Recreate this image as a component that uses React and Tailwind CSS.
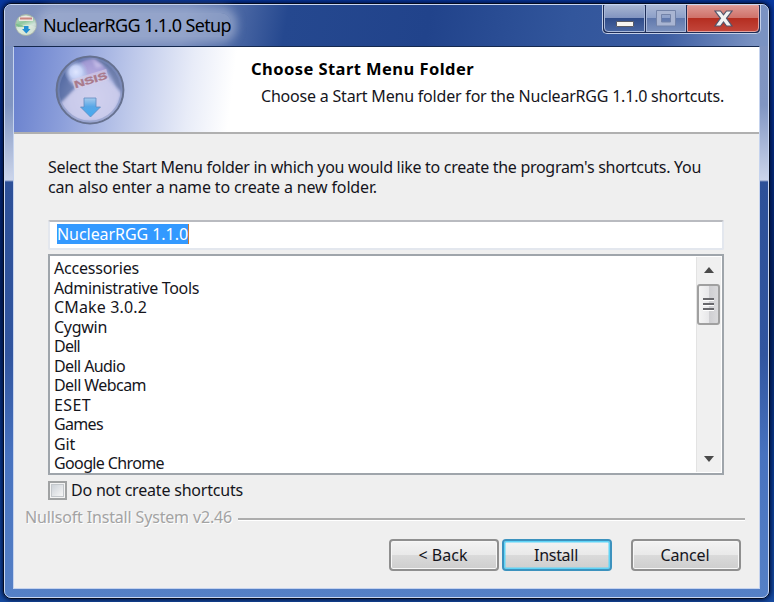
import React, { useLayoutEffect, useRef, useState } from "react";

// Text whose tracking is adjusted so that it fills a given width.
function Fit({ w, className = "", children }) {
  const ref = useRef(null);
  const [ls, setLs] = useState(0);
  useLayoutEffect(() => {
    const natural = ref.current.getBoundingClientRect().width - ls * children.length;
    setLs((w - natural) / children.length);
  }, [w, children]);
  return (
    <span ref={ref} style={{ letterSpacing: ls + "px" }} className={"inline-block self-start whitespace-pre " + className}>
      {children}
    </span>
  );
}

const items = [
  ["Accessories", 85], ["Administrative Tools", 145], ["CMake 3.0.2", 93], ["Cygwin", 53],
  ["Dell", 26], ["Dell Audio", 71], ["Dell Webcam", 92], ["ESET", 37], ["Games", 49],
  ["Git", 21], ["Google Chrome", 110],
];

function Globe() {
  return (
    <svg className="ml-[40px] mt-[7px] h-[72px] w-[72px] shrink-0" viewBox="0 0 72 72">
      <defs>
        <radialGradient id="ball" cx="0.55" cy="0.62" r="0.6">
          <stop offset="0" stopColor="#cdd0ee" />
          <stop offset="0.6" stopColor="#b0b9e2" />
          <stop offset="0.85" stopColor="#7b8bc2" />
          <stop offset="1" stopColor="#566aa4" />
        </radialGradient>
        <radialGradient id="shine">
          <stop offset="0" stopColor="#dfe6ff" />
          <stop offset="0.5" stopColor="#c6d2f6" />
          <stop offset="1" stopColor="#b8c5ee" stopOpacity="0" />
        </radialGradient>
        <linearGradient id="arrow" x1="0" y1="0" x2="0" y2="1">
          <stop offset="0" stopColor="#a6cbed" />
          <stop offset="0.45" stopColor="#57a7e7" />
          <stop offset="1" stopColor="#45aaf0" />
        </linearGradient>
        <filter id="soft"><feGaussianBlur stdDeviation="1.6" /></filter>
        <clipPath id="disc"><circle cx="36" cy="36" r="33" /></clipPath>
      </defs>
      <circle cx="36" cy="36" r="33.5" fill="url(#ball)" />
      <g clipPath="url(#disc)">
        <path d="M0 50 Q0 14 30 3 L24 9 L14 26 L22 34 L8 50Z" fill="#4f669c" opacity="0.7" filter="url(#soft)" />
        <path d="M36 0 Q64 4 70 40 L62 32 L54 16Z" fill="#62739f" opacity="0.7" filter="url(#soft)" />
        <path d="M26 8 L40 3 L54 17 L35 24Z" fill="#b3a3dc" opacity="0.75" filter="url(#soft)" />
        <path d="M38 5 L50 12 L42 14Z" fill="#d6cdf0" opacity="0.6" filter="url(#soft)" />
        <path d="M5 50 L22 34 L52 23 L67 40 L56 66 L20 66Z" fill="#d2d0ee" opacity="0.75" filter="url(#soft)" />
        <circle cx="22" cy="18" r="12" fill="url(#shine)" />
      </g>
      <circle cx="36" cy="36" r="33.4" fill="none" stroke="#66718f" strokeWidth="2" />
      <circle cx="36" cy="36" r="31.5" fill="none" stroke="#7f8fbd" strokeWidth="2" opacity="0.5" />
      <g transform="rotate(-17 37 27)">
        <rect x="19" y="20" width="36" height="11" fill="#d8cde6" opacity="0.6" />
        <text x="20" y="29.5" fontSize="10" fontWeight="bold" textLength="34" lengthAdjust="spacingAndGlyphs" fontFamily="Liberation Sans, sans-serif" fill="#a97a8c" stroke="#a97a8c" strokeWidth="0.3">NSIS</text>
      </g>
      <path d="M30 44 H42 V53 H46.500 L36.500 63 L26.500 53 H30Z" fill="url(#arrow)" stroke="#5f8bc0" strokeWidth="0.8" />
    </svg>
  );
}

function AppIcon() {
  return (
    <svg className="h-[24px] w-[24px] shrink-0" viewBox="0 0 24 24">
      <defs>
        <linearGradient id="mini" x1="0" y1="0" x2="0.4" y2="1">
          <stop offset="0" stopColor="#dcebe5" />
          <stop offset="0.45" stopColor="#8fc79e" />
          <stop offset="0.7" stopColor="#d7e9dc" />
          <stop offset="1" stopColor="#b9cbb6" />
        </linearGradient>
      </defs>
      <circle cx="12" cy="12" r="10.5" fill="url(#mini)" stroke="#a6b0a8" />
      <path d="M2 14 Q12 10 22 14 Q20 21 12 22 Q4 21 2 14Z" fill="#e2eedf" opacity="0.7" />
      <path d="M1.500 11 L8 12 L11 14 H4Z" fill="#6fb780" opacity="0.7" />
      <path d="M5 4.500 Q12 1 19 4.500 V8 H5Z" fill="#f0e7e2" />
      <path d="M6 5.500 H18" stroke="#c98580" strokeWidth="2" />
      <path d="M10 13 H14.500 V16 H16.500 L12.300 20.500 L8 16 H10Z" fill="#238fd3" />
    </svg>
  );
}

function Button({ children, w, primary }) {
  return (
    <div className={"flex h-[32px] w-[110px] items-center justify-center rounded-[4px] border-2 bg-[linear-gradient(#f3f3f3,#e9e9e9_49%,#dadada_51%,#cecece)] pr-[2px] " +
      (primary ? "border-[#3c92be] shadow-[inset_0_0_0_1.5px_#5fd4f7]" : "border-[#8f8f8f] shadow-[inset_0_0_0_1px_#f7f7f7]")}>
      <Fit w={w} className="mt-[4px]">{children}</Fit>
    </div>
  );
}

function Caption() {
  return (
    <div className="mr-[7px] flex h-[29px] w-[159px] shrink-0 rounded-b-[5px] border border-t-0 border-[#c3cfe8] bg-[#1d2c56] px-px pb-px">
      <div className="flex w-[41px] items-center justify-center rounded-bl-[4px] border border-[#a9b9da] bg-[linear-gradient(#a5b3d1,#8194c0_48%,#304c89_50%,#4865a1)] pt-[10px]">
        <div className="h-[6px] w-[18px] rounded-[1px] border border-[#5a5c66] bg-[#f7f5f0]" />
      </div>
      <div className="ml-px flex w-[40px] items-center justify-center border border-[#a9b9da] bg-[linear-gradient(#aab7d5,#8c9fc8_48%,#6179ad_50%,#7b91bd)]">
        <svg className="h-[17px] w-[20px]" viewBox="0 0 20 17">
          <path fillRule="evenodd" d="M.5.5h19v15.500H.5ZM5.500 4.500v7.500h9V4.500Z" fill="#a9b5d2" stroke="#7383a8" />
        </svg>
      </div>
      <div className="ml-px flex flex-1 items-center justify-center rounded-br-[4px] border border-[#e2a29f] bg-[linear-gradient(#dd9792,#cf7169_48%,#b52e21_50%,#c2453a)]">
        <svg className="h-[17px] w-[19px]" viewBox="0 0 19 17">
          <path d="M1 1 H6.500 L9.500 4.800 L12.500 1 H18 L12.500 8.300 L18 16 H12.500 L9.500 12 L6.500 16 H1 L6.500 8.300Z" fill="#f2f2f3" stroke="#53566c" strokeWidth="1.200" />
        </svg>
      </div>
    </div>
  );
}

export default function App() {
  return (
    <div className="h-[602px] w-[774px] overflow-hidden bg-[linear-gradient(#0838a0,#04297c_25%,#03215f_50%,#0a3c93_80%,#164a9f)] pl-[3px] pt-[3px] font-['Noto_Sans','Open_Sans',sans-serif] text-[16px] leading-[20px] text-[#15151c]">
      <div className="h-[596px] w-[767px] rounded-[8px] border border-[#050d22] shadow-[0_0_4px_1px_#01103c]">
        <div className="flex h-full w-full flex-col rounded-[7px] border border-[#c9d7f2] bg-[linear-gradient(#7d91bf_0px,#8095c2_100px,#ccd5ea_175px,#2d5098_177px,#31559f_350px,#4772bf_450px,#5580c6)] px-[8px]">
          <div className="-mx-[8px] flex h-[41px] shrink-0 items-start justify-between rounded-t-[6px] bg-[linear-gradient(100deg,#8394bf_0px,#7389bb_180px,#25488f_280px,#21438b_420px,#32569c_560px,#3a5ba0_650px,#7a92c2_745px)] pl-[9px]">
            <div className="flex items-center pt-[8px]">
              <AppIcon />
              <Fit w={188} className="ml-[5px] rounded-[10px] bg-[#a8b6d3]/60 text-[18px] leading-[24px] text-black shadow-[0_0_8px_6px_rgba(168,182,211,0.6)]">NuclearRGG 1.1.0 Setup</Fit>
            </div>
            <Caption />
          </div>
          <div className="flex h-[543px] flex-col border border-[#c5d3ee] border-t-[#15294f] bg-[#efefef]">
            <div className="flex h-[87px] shrink-0 border-b-2 border-[#b0b0b0] bg-[linear-gradient(97deg,#677fcd,#8b9eda_55px,#bdc8ea_120px,#e8ecf8_180px,#fff_222px)]">
              <Globe />
              <div className="ml-[125px] mt-[12px] flex flex-col items-start">
                <Fit w={223} className="text-[16.500px] font-bold text-black">Choose Start Menu Folder</Fit>
                <Fit w={463} className="ml-[10px] mt-[7px]">Choose a Start Menu folder for the NuclearRGG 1.1.0 shortcuts.</Fit>
              </div>
            </div>
            <div className="flex flex-col items-start pl-[34px] pt-[23px]">
              <Fit w={653}>Select the Start Menu folder in which you would like to create the program's shortcuts. You</Fit>
              <Fit w={329}>can also enter a name to create a new folder.</Fit>
              <div className="mt-[23px] flex h-[30px] w-[676px] items-start rounded-[2px] border-2 border-[#e3e7ee] border-t-[#b9bbc0] bg-white pl-[7px] pt-[2px]">
                <Fit w={131} className="h-[20px] bg-[#3399ff] text-white shadow-[1px_0_0_#cc7832]">NuclearRGG 1.1.0</Fit>
              </div>
              <div className="mt-[4px] flex h-[221px] w-[676px] justify-between border-2 border-[#9fa5ab] bg-white">
                <div className="flex flex-col items-start pl-[4px] pt-[3px] leading-[19.500px]">
                  {items.map(([t, w]) => <Fit key={t} w={w}>{t}</Fit>)}
                </div>
                <div className="mb-px mr-px mt-px flex w-[25px] flex-col items-center justify-between bg-[#f0f0f0] shadow-[inset_1px_0_0_#e3e3e3]">
                  <div className="flex flex-col items-center">
                    <svg className="mt-[10px] h-[6px] w-[10px]" viewBox="0 0 10 6"><path d="M5 0 L10 6 H0Z" fill="#4a4a4a" /></svg>
                    <div className="mt-[11px] flex h-[41px] w-[23px] flex-col items-center justify-center gap-[2px] rounded-[3px] border-2 border-[#a0a0a0] bg-[linear-gradient(90deg,#f5f5f5,#e8e8ea_50%,#cfcfd2_55%,#dadadc)]">
                      <div className="h-[3px] w-[11px] border-b border-white bg-[#68686c]" />
                      <div className="h-[3px] w-[11px] border-b border-white bg-[#68686c]" />
                      <div className="h-[3px] w-[11px] border-b border-white bg-[#68686c]" />
                    </div>
                  </div>
                  <svg className="mb-[10px] h-[6px] w-[10px]" viewBox="0 0 10 6"><path d="M0 0 H10 L5 6Z" fill="#4a4a4a" /></svg>
                </div>
              </div>
              <div className="mt-[5px] flex h-[20px] items-center">
                <div className="mr-[4px] h-[19px] w-[19px] border-2 border-[#a0a2a3] bg-[#f4f4f4] p-px">
                  <div className="h-full w-full border border-[#c3c7cb] bg-[linear-gradient(135deg,#cdd2d8,#f6f6f6)]" />
                </div>
                <Fit w={172}>Do not create shortcuts</Fit>
              </div>
            </div>
            <div className="mt-[7px] flex h-[21px] items-center pl-[11px] pr-[14px]">
              <Fit w={207} className="text-[#a3a3a3] [text-shadow:1px_1px_0_#fff]">Nullsoft Install System v2.46</Fit>
              <div className="ml-[6px] mt-[4px] h-[3px] flex-1 border-b border-white bg-[#adadad]" />
            </div>
            <div className="mt-[11px] flex justify-end pr-[18px]">
              <Button w={49}>{"< Back"}</Button>
              <div className="ml-[3px]"><Button w={44} primary>Install</Button></div>
              <div className="ml-[19px]"><Button w={49}>Cancel</Button></div>
            </div>
          </div>
        </div>
      </div>
    </div>
  );
}
